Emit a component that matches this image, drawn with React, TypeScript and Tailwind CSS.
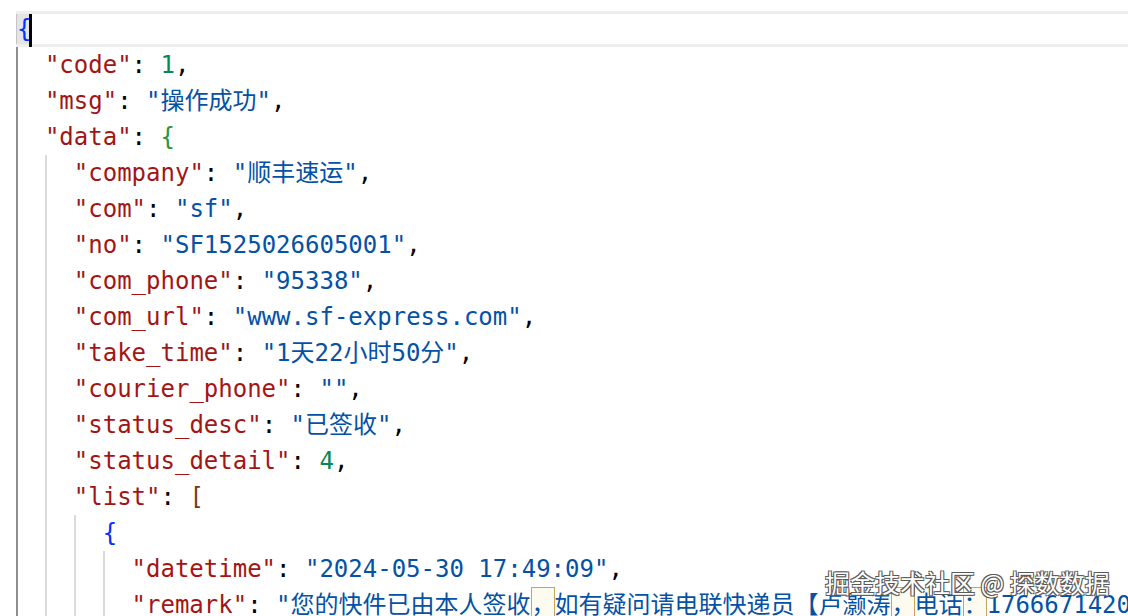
import React from 'react';

type Tok = [string, string];
type Line = { indent: number; toks: Tok[] };

const C: Record<string, string> = {
  k: 'text-[#a31515]',
  s: 'text-[#0451a5]',
  n: 'text-[#098658]',
  p: 'text-black',
  b1: 'text-[#0431fa]',
  b2: 'text-[#319331]',
  b3: 'text-[#7b3814]',
};

const lines: Line[] = [
  { indent: 1, toks: [['k', '"code"'], ['p', ': '], ['n', '1'], ['p', ',']] },
  { indent: 1, toks: [['k', '"msg"'], ['p', ': '], ['s', '"操作成功"'], ['p', ',']] },
  { indent: 1, toks: [['k', '"data"'], ['p', ': '], ['b2', '{']] },
  { indent: 2, toks: [['k', '"company"'], ['p', ': '], ['s', '"顺丰速运"'], ['p', ',']] },
  { indent: 2, toks: [['k', '"com"'], ['p', ': '], ['s', '"sf"'], ['p', ',']] },
  { indent: 2, toks: [['k', '"no"'], ['p', ': '], ['s', '"SF1525026605001"'], ['p', ',']] },
  { indent: 2, toks: [['k', '"com_phone"'], ['p', ': '], ['s', '"95338"'], ['p', ',']] },
  { indent: 2, toks: [['k', '"com_url"'], ['p', ': '], ['s', '"www.sf-express.com"'], ['p', ',']] },
  { indent: 2, toks: [['k', '"take_time"'], ['p', ': '], ['s', '"1天22小时50分"'], ['p', ',']] },
  { indent: 2, toks: [['k', '"courier_phone"'], ['p', ': '], ['s', '""'], ['p', ',']] },
  { indent: 2, toks: [['k', '"status_desc"'], ['p', ': '], ['s', '"已签收"'], ['p', ',']] },
  { indent: 2, toks: [['k', '"status_detail"'], ['p', ': '], ['n', '4'], ['p', ',']] },
  { indent: 2, toks: [['k', '"list"'], ['p', ': '], ['b3', '[']] },
  { indent: 3, toks: [['b1', '{']] },
  { indent: 4, toks: [['k', '"datetime"'], ['p', ': '], ['s', '"2024-05-30 17:49:09"'], ['p', ',']] },
  {
    indent: 4,
    toks: [
      ['k', '"remark"'],
      ['p', ': '],
      ['s', '"您的快件已由本人签收'],
      ['box', '，'],
      ['s', '如有疑问请电联快递员【卢灏涛'],
      ['box', '，'],
      ['s', '电话'],
      ['box', '：'],
      ['s', '17666714200】，感谢您使用顺丰，期待再次为您服务。"'],
    ],
  },
];

function Guides({ n }: { n: number }) {
  return (
    <>
      {Array.from({ length: n }).map((_, i) => (
        <span
          key={i}
          className={
            'inline-block w-[2ch] h-[36px] align-top border-l-2 ' +
            (i === 0 ? 'border-[#8f8f8f]' : 'border-[#dadada]')
          }
        />
      ))}
    </>
  );
}

export default function App() {
  return (
    <div className="relative w-[1128px] h-[616px] overflow-hidden bg-white">
      <div className="pt-[11px] pl-[16px] font-['DejaVu_Sans_Mono','Noto_Sans_CJK_SC',monospace] text-[24px] whitespace-pre">
        {/* current line */}
        <div className="h-[36px] border-y-[3px] border-[#eeeeee] leading-[30px] flex items-start">
          <span className="inline-block h-[30px] w-[13px] bg-[#e4e4e4] border-l border-[#c4c4c4] text-[#0431fa] overflow-visible">
            {'{'}
          </span>
          <span className="inline-block w-[3px] h-[33px] bg-black" />
        </div>

        {lines.map((ln, i) => (
          <div key={i} className="h-[36px] leading-[36px]">
            <Guides n={ln.indent} />
            {ln.toks.map(([t, txt], j) =>
              t === 'box' ? (
                <span
                  key={j}
                  className="inline-block w-[24px] h-[36px] align-top border border-[#c9a45c] bg-[#fdfaf0] text-[#0451a5] leading-[34px]"
                >
                  {txt}
                </span>
              ) : (
                <span key={j} className={C[t]}>
                  {txt}
                </span>
              )
            )}
          </div>
        ))}
      </div>

      {/* watermark */}
      <div className="absolute left-[825px] top-[565px] font-['Noto_Sans_CJK_SC',sans-serif] text-[25px] leading-[34px] text-white whitespace-pre [text-shadow:1px_1px_0_#5a5a5a,-1px_-1px_0_#5a5a5a,1px_-1px_0_#5a5a5a,-1px_1px_0_#5a5a5a]">
        掘金技术社区 @ 探数数据
      </div>
    </div>
  );
}
